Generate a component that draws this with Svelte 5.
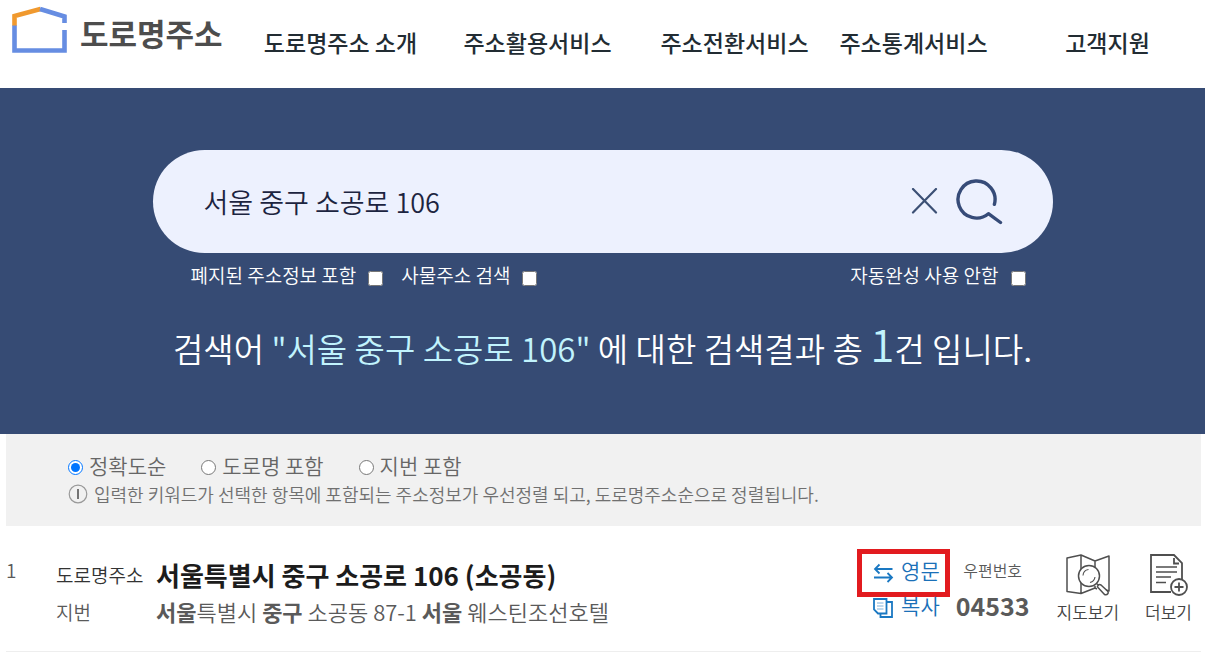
<script lang="ts">
	const menu = ['도로명주소 소개', '주소활용서비스', '주소전환서비스', '주소통계서비스', '고객지원'];
	const sorts = [
		{ value: 'accuracy', label: '정확도순' },
		{ value: 'road', label: '도로명 포함' },
		{ value: 'jibun', label: '지번 포함' }
	];

	let keyword = $state('서울 중구 소공로 106');
	let submitted = $state('서울 중구 소공로 106');
	let sort = $state('accuracy');
	let includeClosed = $state(false);
	let objectSearch = $state(false);
	let noAutocomplete = $state(false);

	function search(e: SubmitEvent) {
		e.preventDefault();
		submitted = keyword;
	}
</script>

<header>
	<a class="logo" href="#home">
		<svg width="56" height="48" viewBox="0 0 56 48" fill="none" stroke-width="4.6" aria-hidden="true">
			<path d="M2.500 20V10L28.500 3" stroke="#f0992e" />
			<path d="M28 3L52.500 10.500V17M52.500 24V44.500H2.500V19.500" stroke="#668de2" />
		</svg>
		<span>도로명주소</span>
	</a>
	<nav>
		{#each menu as item}
			<a href="#menu">{item}</a>
		{/each}
	</nav>
</header>

<section class="banner">
	<form onsubmit={search}>
		<div class="search">
			<input type="text" aria-label="검색어" bind:value={keyword} />
			<button type="button" aria-label="지우기" onclick={() => (keyword = '')}>
				<svg width="27" height="28" viewBox="0 0 27 28" fill="none" stroke="#3c5075" stroke-width="2.2" stroke-linecap="round">
					<path d="M2 1L25 24.500M25 1L2 24.500" />
				</svg>
			</button>
			<button type="submit" aria-label="검색">
				<svg width="48" height="48" viewBox="0 0 48 48" fill="none" stroke="#364b78" stroke-width="3.4" stroke-linecap="round" stroke-linejoin="round">
					<path d="M38.400 26.300A18.500 18.500 0 1 0 32.400 35.700L44.500 44.500" />
				</svg>
			</button>
		</div>
		<div class="options">
			<label>폐지된 주소정보 포함 <input type="checkbox" bind:checked={includeClosed} /></label>
			<label>사물주소 검색 <input type="checkbox" bind:checked={objectSearch} /></label>
			<label class="end">자동완성 사용 안함 <input type="checkbox" bind:checked={noAutocomplete} /></label>
		</div>
	</form>
	<p class="summary">
		검색어 <em>"{submitted}"</em> 에 대한 검색결과 총 <em class="count">1</em>건 입니다.
	</p>
</section>

<main>
	<section class="filter">
		<div class="sorts">
			{#each sorts as s}
				<label><input type="radio" name="sort" value={s.value} bind:group={sort} />{s.label}</label>
			{/each}
		</div>
		<p class="note">
			<svg width="20" height="20" viewBox="0 0 20 20" fill="none" aria-hidden="true">
				<circle cx="10" cy="10" r="8.8" stroke="#999" stroke-width="1.2" />
				<path d="M10 5v10" stroke="#555" stroke-width="1.6" />
			</svg>
			입력한 키워드가 선택한 항목에 포함되는 주소정보가 우선정렬 되고, 도로명주소순으로 정렬됩니다.
		</p>
	</section>

	<article>
		<span class="index">1</span>
		<dl>
			<dt>도로명주소</dt>
			<dd class="road">서울특별시 중구 소공로 106 (소공동)</dd>
			<dt class="sub">지번</dt>
			<dd class="jibun"><b>서울</b>특별시 <b>중구</b> 소공동 87-1 <b>서울</b> 웨스틴조선호텔</dd>
		</dl>
		<div class="links">
			<button type="button" class="marked">
				<svg width="21" height="20" viewBox="0 0 21 20" fill="none" stroke="#1a78c2" stroke-width="1.8" aria-hidden="true">
					<path d="M19.500 6H2M6.500 1.500L2 6L6.500 10.500M1 14.500H19M14.500 10L19 14.500L14.500 19" />
				</svg>
				영문
			</button>
			<button type="button">
				<svg width="21" height="20" viewBox="0 0 21 20" fill="none" stroke="#1a78c2" stroke-width="1.8" aria-hidden="true">
					<path d="M1 1H13.500V15.500H5L1 11.500ZM14 4H19V19H7.500V16" />
					<path d="M4 5H10.500M4 8H10.500M4 11H10.500" stroke="#7fb2dc" stroke-width="1" />
				</svg>
				복사
			</button>
		</div>
		<div class="zip">
			<span>우편번호</span>
			<strong>04533</strong>
		</div>
		<button type="button" class="tool map">
			<svg width="44" height="42" viewBox="0 0 44 42" fill="none" stroke="#4f4f4f" stroke-width="1.5" stroke-linejoin="round" aria-hidden="true">
				<path d="M31 35L29 34L15 39.500L1 37.500V4L15 1L29 7L43 2V37L40 36M15 1V39.500M29 7V14M29 32V34" />
				<circle cx="23" cy="22" r="10.500" fill="#fff" />
				<path d="M17 21.500A6.500 6.500 0 0 1 22.500 15.500M29 23A6.500 6.500 0 0 1 24 28.500" stroke-width="1.1" />
				<path d="M30.500 29.500L33 31.500M32 33.500L38.500 40.500Q40.500 41.500 42 39.500Q42.500 38 41.500 37L35 31Q33 30 32 31.500Q31 32.500 32 33.500Z" />
			</svg>
			지도보기
		</button>
		<button type="button" class="tool">
			<svg width="40" height="42" viewBox="0 0 40 42" fill="none" stroke="#4f4f4f" stroke-width="1.8" aria-hidden="true">
				<path d="M33 25V9L25 1H2V38H22" />
				<path d="M25 4V9.500H30" />
				<path d="M7 13H28M7 18H28M7 23H22M7 28.500H17" stroke-width="1.500" />
				<circle cx="30" cy="33" r="8" fill="#fff" />
				<path d="M30 28.500V37.500M25.500 33H34.500" />
			</svg>
			더보기
		</button>
	</article>
</main>

<style>
	:global(body) {
		margin: 0;
		background: #fff;
		color: #5a5a5a;
		font-family: 'Noto Sans CJK KR', 'Noto Sans', sans-serif;
	}

	a {
		color: inherit;
		text-decoration: none;
	}

	button {
		padding: 0;
		border: 0;
		background: none;
		color: inherit;
		font: inherit;
		cursor: pointer;
	}

	svg {
		display: block;
		flex: none;
	}

	input[type='checkbox'],
	input[type='radio'] {
		width: 15px;
		height: 15px;
		margin: 0;
	}

	header {
		display: flex;
		height: 88px;
	}

	.logo {
		display: flex;
		flex: none;
		gap: 12px;
		box-sizing: border-box;
		width: 242px;
		padding: 6px 0 0 12px;
		color: #4d4d4d;
		font-size: 31px;
		font-weight: 700;
		line-height: 54px;
	}

	nav {
		display: grid;
		flex: 1;
		grid-template-columns: 197fr 197fr 197fr 161fr 211fr;
		color: #222c33;
		font-size: 23px;
		font-weight: 500;
		line-height: 85px;
		text-align: center;
		white-space: nowrap;
	}

	nav a:last-child {
		padding-left: 16px;
	}

	.banner {
		padding: 62px 20px 57px;
		background: #364b74;
		color: #fff;
		font-weight: 350;
	}

	form {
		max-width: 900px;
		margin: 0 auto;
	}

	.search {
		display: flex;
		align-items: center;
		gap: 18px;
		height: 103px;
		padding: 0 49px 0 51px;
		border-radius: 52px;
		background: #edf1fe;
		box-sizing: border-box;
	}

	.search input {
		flex: 1;
		min-width: 0;
		padding: 0;
		border: 0;
		background: none;
		color: #1c2440;
		font: inherit;
		font-size: 27px;
		outline: none;
	}

	.options {
		display: flex;
		gap: 18px;
		padding: 7px 27px 0 38px;
		font-size: 19px;
		line-height: 30px;
	}

	.options label {
		display: flex;
		align-items: center;
		gap: 12px;
	}

	.options input {
		margin-top: 6px;
	}

	.options .end {
		margin-left: auto;
	}

	.summary {
		margin: 29px 0 0;
		font-size: 33px;
		line-height: 58px;
		text-align: center;
	}

	.summary em {
		color: #c1f3fd;
		font-style: normal;
	}

	.summary .count {
		font-size: 44px;
		line-height: 40px;
	}

	main {
		padding: 0 4px 0 6px;
	}

	.filter {
		padding: 17px 62px 18px;
		background: #f1f1f1;
		color: #666;
		font-weight: 350;
	}

	.sorts {
		display: flex;
		gap: 35px;
		font-size: 21px;
		line-height: 29px;
	}

	.sorts label {
		display: flex;
		align-items: center;
		gap: 6px;
	}

	.sorts input {
		margin-top: 4px;
	}

	.note {
		display: flex;
		align-items: center;
		gap: 6px;
		margin: 0;
		color: #707070;
		font-size: 18px;
		line-height: 28px;
	}

	article {
		display: flex;
		align-items: flex-start;
		padding: 30px 9px 21px 0;
		border-bottom: 1px solid #eee;
		font-weight: 350;
	}

	.index {
		width: 50px;
		font-size: 19px;
		line-height: 28px;
	}

	dl {
		display: grid;
		flex: 1;
		grid-template-columns: 100px 1fr;
		margin: 0;
		line-height: 37px;
		white-space: nowrap;
	}

	dt {
		color: #333;
		font-size: 19px;
	}

	.sub {
		color: #5a5a5a;
	}

	dd {
		margin: 0;
	}

	.road {
		color: #1c1c1c;
		font-size: 26px;
		font-weight: 700;
	}

	.jibun {
		font-size: 22px;
	}

	.jibun b {
		font-weight: 700;
	}

	.links {
		display: flex;
		flex-direction: column;
		margin: -3px 16px 0 0;
		color: #1a70b8;
		font-size: 21px;
		line-height: 35px;
	}

	.links button {
		position: relative;
		display: flex;
		align-items: center;
		gap: 7px;
	}

	.links svg {
		margin-top: 5px;
	}

	.marked::after {
		position: absolute;
		inset: -4px -10px -9px -16px;
		border: 5px solid #e21b1f;
		content: '';
	}

	.zip {
		display: flex;
		flex-direction: column;
		align-items: center;
		margin: -3px 27px 0 0;
		font-size: 16px;
		line-height: 35px;
	}

	.zip strong {
		font-size: 25px;
		font-weight: 700;
	}

	.tool {
		display: flex;
		flex-direction: column;
		align-items: center;
		gap: 3px;
		margin-top: -2px;
		color: #444;
		font-size: 17px;
		line-height: 25px;
	}

	.map {
		margin-right: 26px;
	}
</style>
